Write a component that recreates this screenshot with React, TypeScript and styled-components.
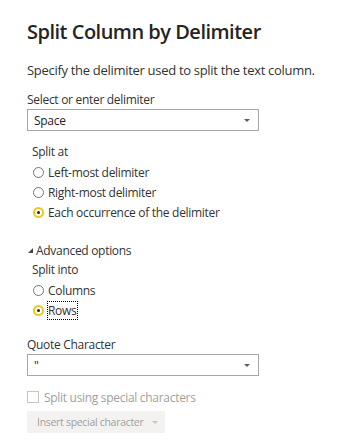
import React from 'react'
import styled, { createGlobalStyle } from 'styled-components'

const Global = createGlobalStyle`
  html, body {
    margin: 0;
    padding: 0;
    background: #ffffff;
  }
  body {
    font-family: 'Segoe UI', 'Open Sans', 'Liberation Sans', sans-serif;
    color: #252423;
    letter-spacing: -0.3px;
  }
`

const Dialog = styled.div`
  width: 349px;
  height: 447px;
  box-sizing: border-box;
  padding: 18px 0 0 27px;
  display: flex;
  flex-direction: column;
`

const Title = styled.h1`
  margin: 0;
  font-size: 20px;
  line-height: 28px;
  font-weight: 600;
  letter-spacing: -0.5px;
  color: #252423;
`

const Description = styled.p`
  margin: 14px 0 0;
  font-size: 13px;
  line-height: 20px;
  color: #333333;
`

const Label = styled.div<{ $top: number }>`
  margin-top: ${(p) => p.$top}px;
  font-size: 12px;
  line-height: 18px;
  color: #333333;
`

const Select = styled.div`
  width: 232px;
  height: 22px;
  box-sizing: border-box;
  border: 1px solid #a6a6a6;
  display: flex;
  align-items: center;
  justify-content: space-between;
  padding: 0 8px 0 6px;
  font-size: 12px;
  color: #252423;
`

const Caret = styled.span<{ $color?: string }>`
  width: 0;
  height: 0;
  border-left: 3px solid transparent;
  border-right: 3px solid transparent;
  border-top: 3px solid ${(p) => p.$color ?? '#605e5c'};
`

const Group = styled.div<{ $top: number }>`
  margin-top: ${(p) => p.$top}px;
  padding-left: 5px;
  display: flex;
  flex-direction: column;
`

const GroupTitle = styled.div`
  font-size: 12px;
  line-height: 20px;
  color: #333333;
`

const RadioRow = styled.label`
  display: flex;
  align-items: center;
  height: 20px;
  gap: 4px;
  font-size: 12px;
  color: #333333;
`

const RadioDot = styled.span<{ $checked?: boolean }>`
  width: 11px;
  height: 11px;
  box-sizing: border-box;
  border-radius: 50%;
  border: ${(p) => (p.$checked ? '2px solid #f2c811' : '1px solid #767676')};
  background: #fff;
  display: flex;
  align-items: center;
  justify-content: center;
  margin-left: 1px;
  &::after {
    content: '';
    display: ${(p) => (p.$checked ? 'block' : 'none')};
    width: 3px;
    height: 3px;
    border-radius: 50%;
    background: #252423;
  }
`

const Focused = styled.span`
  outline: 1px dotted #000;
  outline-offset: 0;
  line-height: 17px;
  padding: 0 1px 0 0;
`

const Toggle = styled.div`
  margin-top: 18px;
  display: flex;
  align-items: center;
  gap: 3px;
  height: 20px;
  font-size: 12px;
  color: #333333;
  margin-left: 1px;
`

const Check = styled.div`
  margin-top: 11px;
  display: flex;
  align-items: center;
  gap: 5px;
  height: 20px;
  font-size: 12px;
  color: #a19f9d;
`

const Box = styled.span`
  width: 12px;
  height: 12px;
  box-sizing: border-box;
  border: 1px solid #c8c6c4;
  background: #fff;
`

const Button = styled.div`
  margin-top: 4px;
  width: 138px;
  height: 22px;
  box-sizing: border-box;
  background: #f3f2f1;
  display: flex;
  align-items: center;
  gap: 9px;
  padding-left: 10px;
  font-size: 10.5px;
  white-space: nowrap;
  color: #a19f9d;
`

function Radio({ label, checked, focus }: { label: string; checked?: boolean; focus?: boolean }) {
  return (
    <RadioRow>
      <RadioDot $checked={checked} />
      {focus ? <Focused>{label}</Focused> : <span>{label}</span>}
    </RadioRow>
  )
}

export default function App() {
  return (
    <>
      <Global />
      <Dialog>
        <Title>Split Column by Delimiter</Title>
        <Description>Specify the delimiter used to split the text column.</Description>
        <Label $top={11}>Select or enter delimiter</Label>
        <Select>
          <span>Space</span>
          <Caret />
        </Select>
        <Group $top={11}>
          <GroupTitle>Split at</GroupTitle>
          <Radio label="Left-most delimiter" />
          <Radio label="Right-most delimiter" />
          <Radio label="Each occurrence of the delimiter" checked />
        </Group>
        <Toggle>
          <svg width="5" height="5" viewBox="0 0 5 5">
            <polygon points="5,0 5,5 0,5" fill="#444" />
          </svg>
          <span>Advanced options</span>
        </Toggle>
        <Group $top={0}>
          <GroupTitle>Split into</GroupTitle>
          <Radio label="Columns" />
          <Radio label="Rows" checked focus />
        </Group>
        <Label $top={16}>Quote Character</Label>
        <Select>
          <span>"</span>
          <Caret />
        </Select>
        <Check>
          <Box />
          <span>Split using special characters</span>
        </Check>
        <Button>
          <span>Insert special character</span>
          <Caret $color="#c8c6c4" />
        </Button>
      </Dialog>
    </>
  )
}
